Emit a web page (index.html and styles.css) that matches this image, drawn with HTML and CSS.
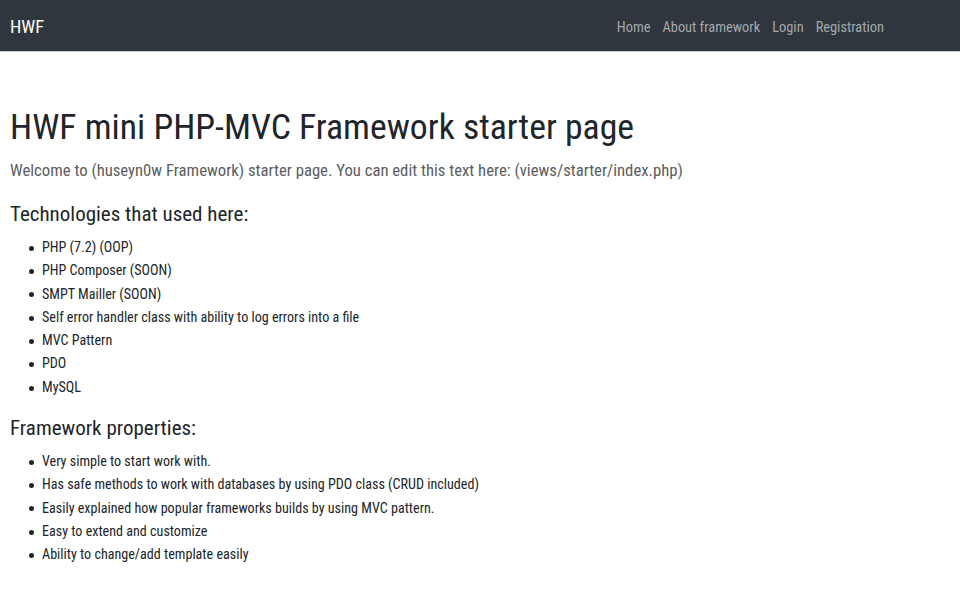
FILE: index.html
```html
<!DOCTYPE html>
<html lang="en">
<head>
<meta charset="utf-8">
<title>HWF mini PHP-MVC Framework</title>
<link rel="stylesheet" href="styles.css">
</head>
<body>
<nav class="navbar">
  <a class="brand" href="#">HWF</a>
  <ul class="nav-links">
    <li><a href="#">Home</a></li>
    <li><a href="#">About framework</a></li>
    <li><a href="#">Login</a></li>
    <li><a href="#">Registration</a></li>
  </ul>
</nav>
<main class="content">
  <h1 class="title">HWF mini PHP-MVC Framework starter page</h1>
  <p class="lead">Welcome to (huseyn0w Framework) starter page. You can edit this text here: (views/starter/index.php)</p>
  <h4 class="section">Technologies that used here:</h4>
  <ul class="list">
    <li>PHP (7.2) (OOP)</li>
    <li>PHP Composer (SOON)</li>
    <li>SMPT Mailler (SOON)</li>
    <li>Self error handler class with ability to log errors into a file</li>
    <li>MVC Pattern</li>
    <li>PDO</li>
    <li>MySQL</li>
  </ul>
  <h4 class="section">Framework properties:</h4>
  <ul class="list">
    <li>Very simple to start work with.</li>
    <li>Has safe methods to work with databases by using PDO class (CRUD included)</li>
    <li>Easily explained how popular frameworks builds by using MVC pattern.</li>
    <li>Easy to extend and customize</li>
    <li>Ability to change/add template easily</li>
  </ul>
</main>
</body>
</html>
```
FILE: styles.css
```css
* { box-sizing: border-box; }
html, body { margin: 0; padding: 0; }
body {
  font-family: "Roboto Condensed", "DejaVu Sans Condensed", sans-serif;
  color: #212529;
  background: #fff;
}
a { text-decoration: none; }

.navbar {
  display: flex;
  align-items: center;
  height: 52px;
  padding: 0 10px;
  background: #2f363d;
  border-bottom: 1px solid #c8cbce;
}
.brand {
  color: #fff;
  font-size: 18.3px;
  margin-top: 2px;
}
.nav-links {
  display: flex;
  gap: 12px;
  margin: 2px 66px 0 auto;
  padding: 0;
  list-style: none;
}
.nav-links a {
  color: #a3a9ae;
  font-size: 14.4px;
}

.content {
  padding: 51px 10px 0;
}
.title {
  margin: 0 0 5px;
  font-size: 35.7px;
  font-weight: 400;
  line-height: 48px;
}
.lead {
  margin: 0 0 14px;
  font-size: 16.7px;
  line-height: 30px;
  font-weight: 400;
  color: #5a5d61;
}
.section {
  margin: 0 0 7px;
  font-size: 21px;
  font-weight: 400;
  line-height: 29px;
}
.list {
  margin: 0 0 15px;
  padding-left: 19px;
  list-style: none;
}
.list li {
  font-size: 14.1px;
  line-height: 23.3px;
}
.list li::before {
  content: "";
  display: inline-block;
  width: 5px;
  height: 5px;
  margin-right: 8px;
  border-radius: 50%;
  background: #212529;
  vertical-align: middle;
}
```
